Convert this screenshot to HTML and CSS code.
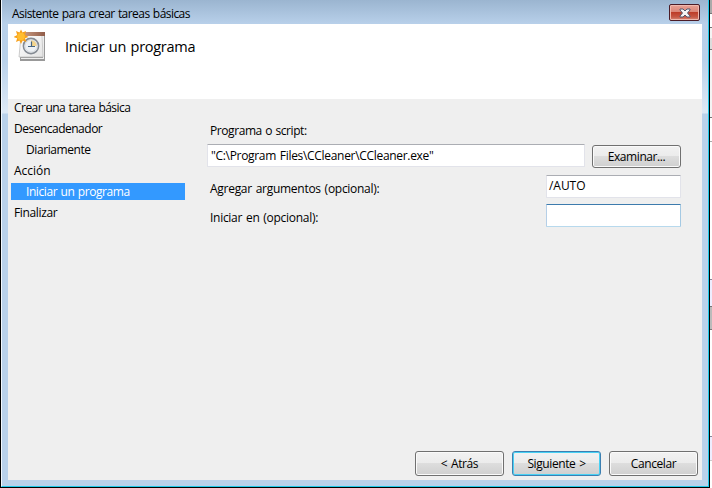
FILE: index.html
```
<!DOCTYPE html>
<html lang="es">
<head>
<meta charset="utf-8">
<title>Asistente para crear tareas básicas</title>
<link rel="stylesheet" href="styles.css">
</head>
<body>
<div class="screen">
  <main class="window">
    <div class="titlebar">
      <span class="title">Asistente para crear tareas básicas</span>
      <button class="close" aria-label="Cerrar">
        <svg width="12" height="10" viewBox="0 0 12 10"><path d="M1 1h3l2 2 2-2h3v1L8.500 5 11 8v1H8L6 7 4 9H1V8l2.500-3L1 2z" fill="#f5f5f5" stroke="#535a70" stroke-width="1"/></svg>
      </button>
    </div>
    <div class="client">
      <header class="header">
        <svg class="icon" width="34" height="34" viewBox="0 0 34 34">
          <defs>
            <linearGradient id="wood" x2="1"><stop stop-color="#c99b82"/><stop offset="1" stop-color="#905c49"/></linearGradient>
            <linearGradient id="paper" x2="1" y2="1"><stop stop-color="#fff"/><stop offset="1" stop-color="#e4e4e4"/></linearGradient>
          </defs>
          <path d="M6 28h24V5h1v27H6z" fill="#999"/>
          <path d="M7 29h22V6h1v24H7z" fill="#ededed"/>
          <path d="M7 6h21l1 22H5z" fill="url(#paper)" stroke="#b8b8b8" stroke-width=".7"/>
          <path d="M9 3h22v4H9z" fill="url(#wood)"/>
          <circle cx="17" cy="17" r="7.600" fill="#edf1f5" stroke="#858b93" stroke-width="1.600"/>
          <path d="M17 17v-6a6 6 0 0 1 6 6z" fill="#f4d58d"/>
          <circle cx="17" cy="17" r="6" fill="none" stroke="#d2d6da" stroke-width=".7"/>
          <path d="M17.500 12.500v5H21M14 17.500h3" fill="none" stroke="#476581" stroke-width="1.200"/>
          <path d="M7 .5l1.600 3L12 2l-1 3.800L14.500 8 11 9.300 12.500 13l-3.800-1.500L7 15l-1.600-3.500L2 13l1.200-3.800L-.5 8l3.700-2L2 2l3.500 1.500z" fill="#f7a01b"/>
          <circle cx="7" cy="7.600" r="3.800" fill="#ffbd30"/>
        </svg>
        <h1>Iniciar un programa</h1>
      </header>
      <div class="content">
        <nav class="steps">
          <div class="step"><span class="s1">Crear una tarea básica</span></div>
          <div class="step"><span class="s2">Desencadenador</span></div>
          <div class="step sub"><span class="s3">Diariamente</span></div>
          <div class="step"><span class="s4">Acción</span></div>
          <div class="step sub active"><span class="s5">Iniciar un programa</span></div>
          <div class="step"><span class="s6">Finalizar</span></div>
        </nav>
        <section class="form">
          <div class="label program-label"><span class="l1">Programa o script:</span></div>
          <div class="program-row">
            <div class="field"><span class="path">"C:\Program Files\CCleaner\CCleaner.exe"</span></div>
            <button class="button browse"><span>Examinar...</span></button>
          </div>
          <div class="row">
            <div class="label"><span class="l2">Agregar argumentos (opcional):</span></div>
            <div class="field small args"><span class="auto">/AUTO</span></div>
          </div>
          <div class="row">
            <div class="label"><span class="l3">Iniciar en (opcional):</span></div>
            <div class="field small focused"></div>
          </div>
        </section>
      </div>
      <footer class="actions">
        <button class="button"><span>&lt; Atrás</span></button>
        <button class="button default"><span>Siguiente &gt;</span></button>
        <button class="button"><span>Cancelar</span></button>
      </footer>
    </div>
  </main>
  <div class="behind"></div>
</div>
</body>
</html>
```
FILE: styles.css
```
* { box-sizing: border-box; }
body {
  margin: 0;
  overflow: hidden;
  font: 12px/17px "Open Sans", "Noto Sans", sans-serif;
  color: #000;
}
button { font: inherit; color: inherit; }
span { white-space: nowrap; }
.screen { display: flex; width: 712px; height: 488px; background: #000; }
.window {
  width: 708px;
  height: 487px;
  margin-left: 1px;
  padding: 0 6px 6px;
  border: 1px solid #1fc8e8;
  border-width: 0 1px 1px;
  border-left-color: #f2f8fe;
  background: linear-gradient(#9bb5d0 0, #b8d0ea 24px, #b9d1ea 60px, #dce8f5 110px, #dce8f5 113px, #b9d1ea 114px);
}
.titlebar { display: flex; justify-content: space-between; height: 24px; padding: 4px 2px 0 4px; }
.title { margin-top: 1px; letter-spacing: -.55px; word-spacing: .7px; }
.close {
  display: flex;
  justify-content: center;
  align-items: center;
  width: 31px;
  height: 17px;
  padding: 0;
  border: 1px solid #4b1c27;
  border-radius: 2px;
  box-shadow: inset 0 0 0 1px #efb9ae;
  background: linear-gradient(#e9a195 0, #d98577 47%, #bd3b27 48%, #c65845 80%, #d98c7c);
}
.client { display: flex; flex-direction: column; height: 456px; width: 694px; background: #efefef; }
.header { display: flex; height: 75px; padding: 5px 0 0 6px; background: #fff; }
.icon { flex: none; }
h1 { margin: 7px 0 0 17px; font-size: 14.500px; line-height: 22px; font-weight: 400; letter-spacing: -.27px; word-spacing: 1px; }
.content { display: flex; flex: 1; }
.steps { display: flex; flex-direction: column; gap: 4px; width: 177px; padding-left: 3px; }
.step { height: 17px; padding-left: 3px; line-height: 17px; }
.sub { padding-left: 15px; }
.active { color: #fff; background: #3399ff; }
.form { width: 474px; margin-left: 22px; padding-top: 23px; }
.label { padding-left: 3px; }
.program-label { height: 22px; }
.program-row { display: flex; gap: 7px; height: 31px; }
.field {
  width: 378px;
  height: 23px;
  padding: 2px 3px;
  border: 1px solid #e2e3ea;
  border-top-color: #abadb3;
  border-radius: 1px;
  background: #fff;
}
.small { width: 135px; }
.args { padding: 1px 2px; }
.focused { border-color: #3d7bad #a4c9e3 #b7d9ed #b5cfe7; }
.row { display: flex; justify-content: space-between; height: 29px; }
.row .label { padding-top: 5px; }
.button {
  width: 89px;
  height: 25px;
  padding: 0;
  border: 1px solid #707070;
  border-radius: 3px;
  box-shadow: inset 0 0 0 1px #fafafa;
  background: linear-gradient(#f2f2f2, #ebebeb 49%, #dddddd 50%, #cfcfcf);
}
.browse { height: 23px; margin-top: 1px; }
.default { border-color: #3c7fb1; box-shadow: inset 0 0 0 1px #48d1f4; }
.actions { display: flex; justify-content: flex-end; gap: 8px; padding: 0 4px 4px; }
.button span { letter-spacing: -.4px; word-spacing: 1px; }
.s1 { letter-spacing: -.53px; word-spacing: .7px; }
.s2 { letter-spacing: -.5px; }
.s3 { letter-spacing: -.42px; }
.s4 { letter-spacing: 0; }
.s5 { letter-spacing: -.42px; word-spacing: .7px; }
.s6 { letter-spacing: -.35px; }
.l1 { letter-spacing: -.42px; word-spacing: .7px; }
.l2 { letter-spacing: -.28px; word-spacing: 1px; }
.l3 { letter-spacing: -.28px; word-spacing: 1px; }
.path { letter-spacing: -.31px; word-spacing: 1px; }
.auto { letter-spacing: -.05px; }
.behind {
  width: 2px;
  margin-left: 1px;
  background: linear-gradient(#aaa 0 13px, #777 13px 14px, #fff 14px 27px, #777 27px 28px, #f4f4f4 28px 38px, #ddd 38px 49px, #777 49px 50px, #f4f4f4 50px 117px, #777 117px 118px, #fff 118px 141px, #aaa 141px 142px, #fff 142px 279px, #889 279px 280px, #eef 280px 306px, #777 306px 307px, #bbb 307px 329px, #777 329px 330px, #fff 330px 436px, #889 436px 437px, #eef 437px 460px, #ccc 460px 461px, #fff 461px);
}
```
